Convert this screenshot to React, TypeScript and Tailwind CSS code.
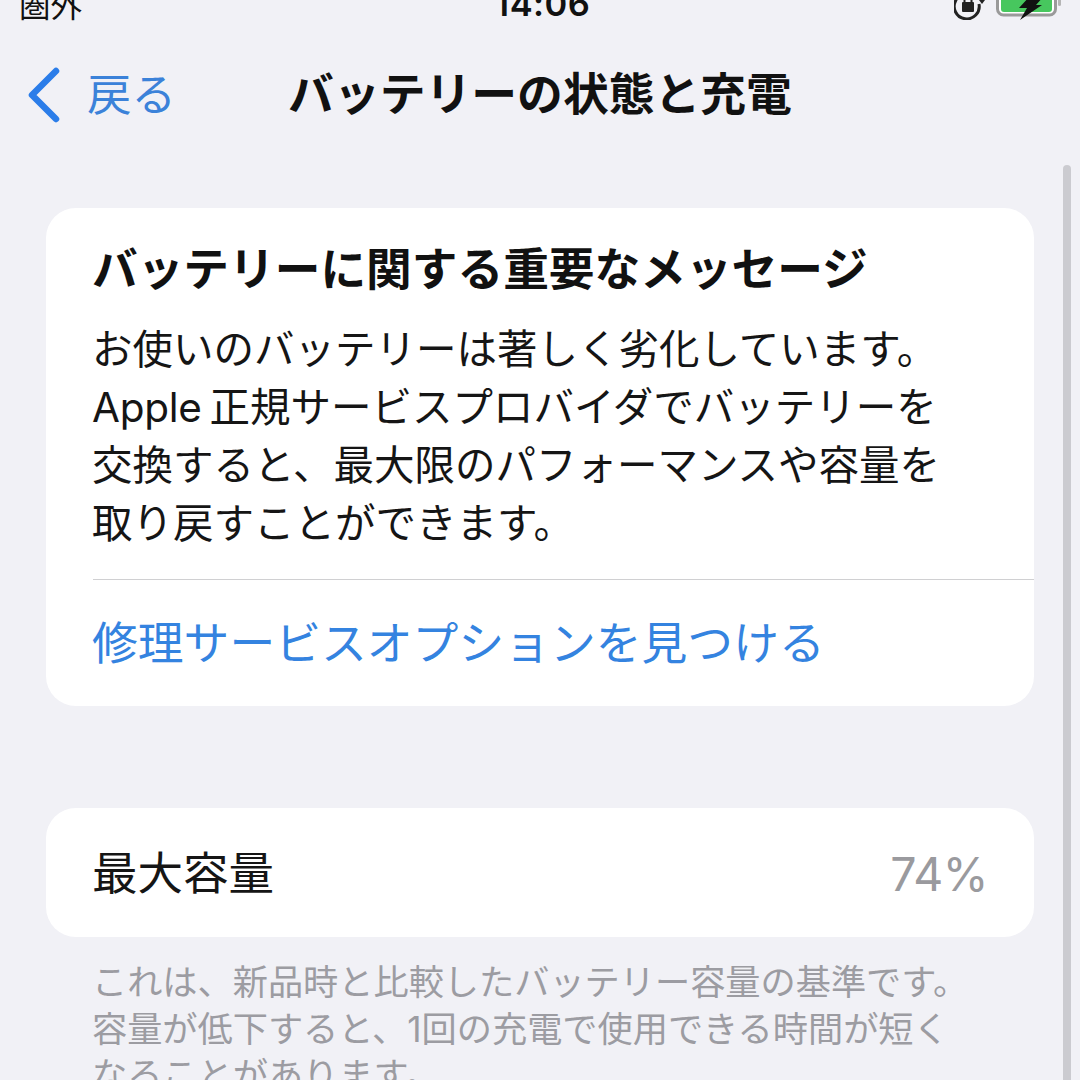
const FONT = "font-['Inter','Noto_Sans_CJK_JP',sans-serif]";

function StatusBar() {
  return (
    <div className="flex h-[20px] items-end justify-between overflow-visible pl-[19px] pr-[14px] text-[31px] leading-[20px] text-[#111]">
      <div className="flex h-[20px] w-[200px] items-end">
        <span className="-mb-[1px] text-[31.500px] leading-none">圏外</span>
      </div>
      <span className="-mb-[1px] text-[34.500px] font-semibold leading-none tracking-[0.5px]">14:06</span>
      <div className="flex h-[20px] w-[200px] items-end justify-end gap-[10px]">
        <svg width="32" height="20" viewBox="0 0 32 20" fill="none">
          <path d="M27 8a12.500 12.500 0 1 1-3-6" stroke="#222" strokeWidth="3" transform="translate(-2 -4)" />
          <rect x="8" y="2" width="12" height="10" rx="1" fill="#222" />
          <path d="M10.500 2V-1h7v3" stroke="#222" strokeWidth="2" />
          <path d="M25 0h6l-3 4z" fill="#222" />
        </svg>
        <svg width="70" height="20" viewBox="0 0 70 20" fill="none">
          <rect x="1.500" y="-14" width="58" height="29" rx="6" fill="#fff" stroke="#9a9a9a" strokeWidth="3" />
          <rect x="5" y="-10" width="51" height="22" rx="3" fill="#47c75e" />
          <path d="M34 -4h14l-8 9h6L24 20l7-12h-8z" fill="#111" />
          <rect x="62" y="-8" width="3" height="14" rx="1.500" fill="#b5b5b5" />
        </svg>
      </div>
    </div>
  );
}

function NavBar() {
  return (
    <div className="relative mt-[36px] flex h-[78px] items-center justify-center">
      <div className="absolute left-[27px] top-[11px] flex items-center gap-[26px] text-[#3b82d9]">
        <svg width="34" height="56" viewBox="0 0 34 56" fill="none">
          <path d="M29 4 5 28l24 24" stroke="#2b7de9" strokeWidth="6.500" strokeLinecap="round" strokeLinejoin="round" />
        </svg>
        <span className="text-[44.500px] leading-none">戻る</span>
      </div>
      <h1 className="text-[45.800px] font-bold leading-none text-[#111]">バッテリーの状態と充電</h1>
    </div>
  );
}

export default function App() {
  return (
    <div className={`relative h-[1080px] w-[1080px] overflow-hidden bg-[#f1f1f6] ${FONT}`}>
      <StatusBar />
      <NavBar />

      {/* scroll indicator */}
      <div className="absolute left-[1063px] top-[165px] h-[930px] w-[8px] rounded-full bg-[#cbcbd0]" />

      <div className="mx-[46px] mt-[74px] flex flex-col">
        <section className="h-[498px] rounded-[30px] bg-white pl-[47px]">
          <h2 className="-ml-[1px] pt-[35px] text-[45.700px] font-bold leading-[54px] text-[#111]">
            バッテリーに関する重要なメッセージ
          </h2>
          <p className="-ml-[1px] mt-[24px] h-[232px] whitespace-nowrap text-[40.500px] leading-[58px] text-[#151515]">
            お使いのバッテリーは著しく劣化しています。
            <br />
            <span className="tracking-[-0.3px]">Apple</span><span className="ml-[8px]">正規サービスプロバイダでバッテリーを</span>
            <br />
            交換すると、最大限のパフォーマンスや容量を
            <br />
            取り戻すことができます。
          </p>
          <div className="mt-[26px] h-[1px] bg-[#d0d0d2]" />
          <div className="-ml-[1px] flex h-[128px] items-center text-[45.800px] leading-none text-[#3483e0]">
            修理サービスオプションを見つける
          </div>
        </section>

        <section className="mt-[102px] flex h-[129px] items-center justify-between rounded-[30px] bg-white pl-[46px] pr-[46px] pt-[3px]">
          <span className="text-[45.500px] leading-none text-[#151515]">最大容量</span>
          <span className="text-[46.500px] leading-none tracking-[-0.5px] text-[#9a9a9e]">74%</span>
        </section>

        <p className="mt-[22px] pl-[46px] text-[35.200px] leading-[46.500px] whitespace-nowrap text-[#9c9ca2]">
          これは、新品時と比較したバッテリー容量の基準です。
          <br />
          容量が低下すると、1回の充電で使用できる時間が短く
          <br />
          なることがあります。
        </p>
      </div>
    </div>
  );
}
